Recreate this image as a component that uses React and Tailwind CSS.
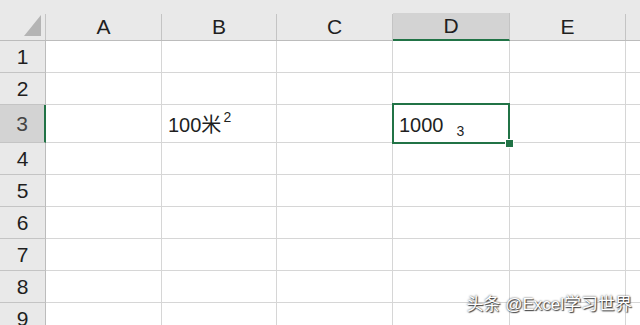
const cols = [
  { key: "A", w: "w-[116px]" },
  { key: "B", w: "w-[115px]" },
  { key: "C", w: "w-[116px]" },
  { key: "D", w: "w-[117px]" },
  { key: "E", w: "w-[116px]" },
  { key: "F", w: "w-[40px]" },
]

const rows = [1, 2, 3, 4, 5, 6, 7, 8, 9]

const CellContent = ({ row, col }) => {
  if (row === 3 && col === "B") {
    return (
      <span className="pl-[6px]">
        100米<sup className="text-[14px] relative -top-[10px] ml-[2px]">2</sup>
      </span>
    )
  }
  if (row === 3 && col === "D") {
    return (
      <span className="pl-[6px]">
        1000<sub className="text-[14px] ml-[13px] relative top-[4px]">3</sub>
      </span>
    )
  }
  return null
}

export default function App() {
  return (
    <div
      className="relative w-[640px] h-[325px] overflow-hidden bg-white text-[#1f1f1f]"
      style={{ fontFamily: '"Liberation Sans", "Noto Sans CJK SC", sans-serif' }}
    >
      {/* column headers */}
      <div className="flex h-[41px] bg-[#e9e9e9] border-b border-[#bcbcbc]">
        <div className="relative w-[46px] shrink-0 flex items-end">
          <div className="h-[26px] w-full border-r border-[#c4c4c4]" />
          <svg className="absolute left-[24px] top-[15px]" width="18" height="21" viewBox="0 0 18 21">
            <polygon points="0,21 17,21 17,0" fill="#b4b4b4" />
          </svg>
        </div>
        {cols.map((c) => (
          <div key={c.key} className={`${c.w} shrink-0 flex items-end`}>
            <div
              className={
                c.key === "D"
                  ? "h-[28px] w-full bg-[#d3d3d3] border-r border-[#c4c4c4] border-b-2 border-b-[#217346] flex items-center justify-center text-[21px] -mb-[1px]"
                  : "h-[26px] w-full border-r border-[#c4c4c4] flex items-center justify-center text-[21px]"
              }
            >
              {c.key === "F" ? "" : c.key}
            </div>
          </div>
        ))}
      </div>

      {/* body rows */}
      {rows.map((r) => (
        <div key={r} className={`flex ${r === 3 ? "h-[38px]" : "h-[32px]"}`}>
          <div
            className={
              r === 3
                ? "w-[46px] shrink-0 bg-[#d3d3d3] border-b border-[#c4c4c4] border-r-2 border-r-[#217346] flex items-center justify-center text-[21px] text-[#444]"
                : "w-[46px] shrink-0 bg-[#e9e9e9] border-b border-[#c4c4c4] border-r border-r-[#bcbcbc] flex items-center justify-center text-[21px]"
            }
          >
            {r}
          </div>
          {cols.map((c) => (
            <div
              key={c.key}
              className={`${c.w} shrink-0 relative border-r border-b border-[#d6d6d6] flex items-end pb-[3px] text-[20px] leading-[28px]`}
            >
              <CellContent row={r} col={c.key} />
              {r === 3 && c.key === "D" && (
                <div className="absolute z-10 -left-[1px] -top-[2px] -right-[1px] -bottom-[2px] border-2 border-[#217346]" />
              )}
              {r === 3 && c.key === "D" && (
                <div className="absolute z-20 -right-[5px] -bottom-[6px] w-[9px] h-[9px] bg-[#217346] border border-white" />
              )}
            </div>
          ))}
        </div>
      ))}

      {/* watermark */}
      <div
        className="absolute z-30 right-[8px] bottom-[8px] text-[17px] text-white"
        style={{ textShadow: "0 0 2px #333, 1px 1px 1px #444" }}
      >
        头条 @Excel学习世界
      </div>
    </div>
  )
}
